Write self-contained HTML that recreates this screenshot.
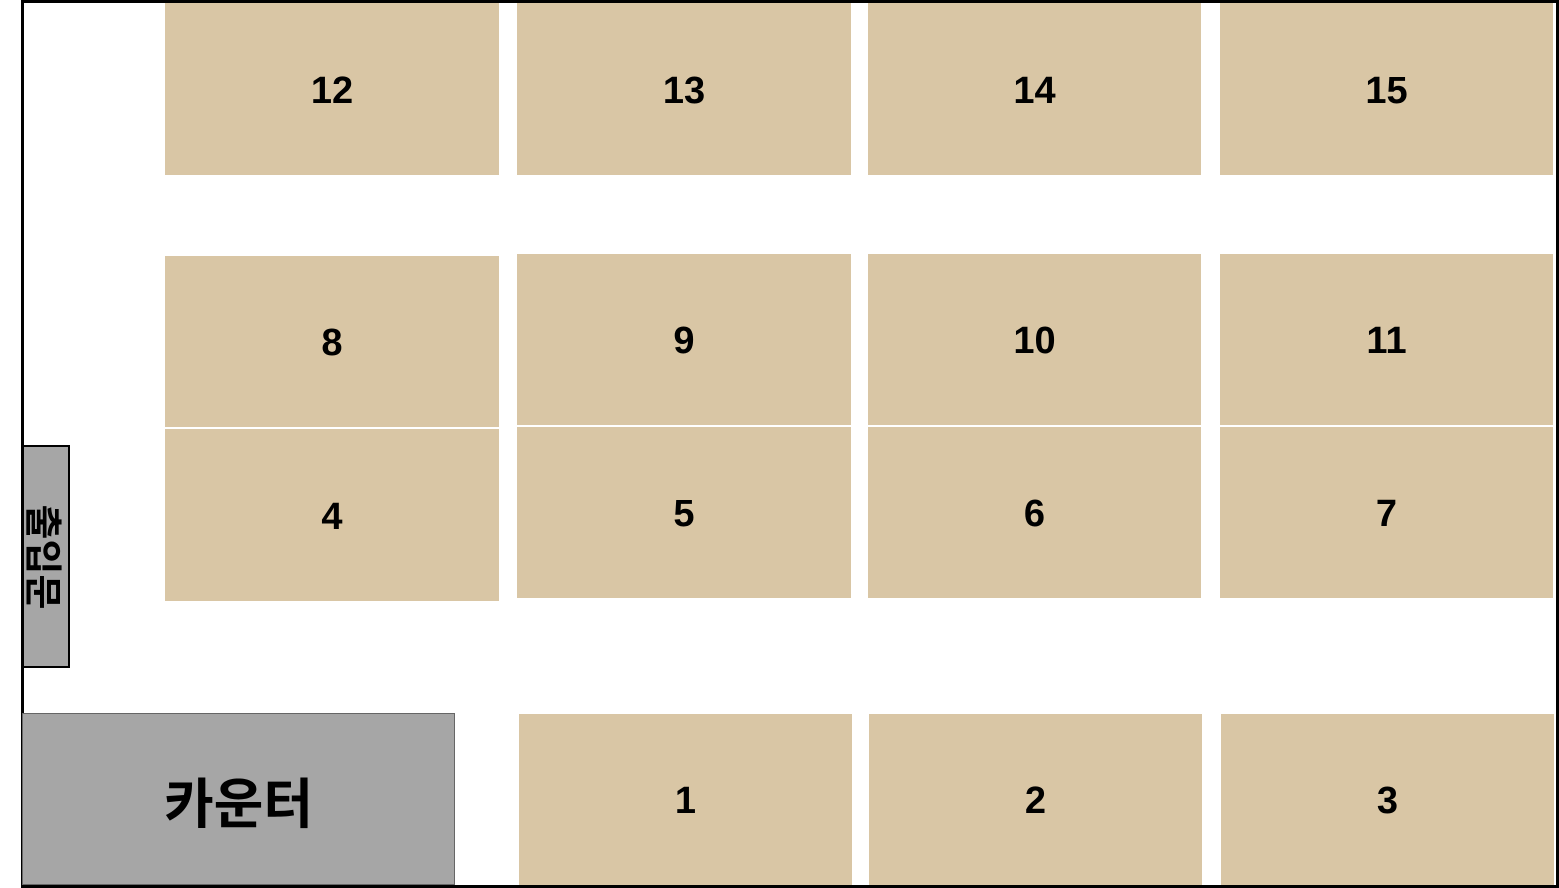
<!DOCTYPE html>
<html><head><meta charset="utf-8"><style>
html,body{margin:0;padding:0;background:#fff;}
body{width:1559px;height:888px;position:relative;overflow:hidden;font-family:"Liberation Sans","Noto Sans CJK KR",sans-serif;}
.frame{position:absolute;left:21px;top:0;border:3px solid #000;box-sizing:border-box;width:1538px;height:888px;}
.b{position:absolute;background:#d9c6a5;display:flex;align-items:center;justify-content:center;font-weight:bold;font-size:38px;color:#000;padding-top:4px;box-sizing:border-box;}
.cnt{position:absolute;left:22px;top:713px;width:433px;height:172px;background:#a6a6a6;border:1px solid #666;box-sizing:border-box;display:flex;align-items:center;justify-content:center;font-size:54px;font-weight:bold;padding-right:0;}
.door{position:absolute;left:22px;top:445px;width:48px;height:223px;background:#a6a6a6;border:2px solid #000;box-sizing:border-box;}
.door span{position:absolute;left:50%;top:50%;transform:translate(-50%,-50%) rotate(90deg);font-size:38px;font-weight:bold;white-space:nowrap;}
</style></head><body>
<div class="frame"></div>
<div class="b" style="left:165px;top:3px;width:334px;height:172px">12</div>
<div class="b" style="left:517px;top:3px;width:334px;height:172px">13</div>
<div class="b" style="left:868px;top:3px;width:333px;height:172px">14</div>
<div class="b" style="left:1220px;top:3px;width:333px;height:172px">15</div>
<div class="b" style="left:165px;top:256px;width:334px;height:171px">8</div>
<div class="b" style="left:517px;top:254px;width:334px;height:171px">9</div>
<div class="b" style="left:868px;top:254px;width:333px;height:171px">10</div>
<div class="b" style="left:1220px;top:254px;width:333px;height:171px">11</div>
<div class="b" style="left:165px;top:429px;width:334px;height:172px">4</div>
<div class="b" style="left:517px;top:427px;width:334px;height:171px">5</div>
<div class="b" style="left:868px;top:427px;width:333px;height:171px">6</div>
<div class="b" style="left:1220px;top:427px;width:333px;height:171px">7</div>
<div class="b" style="left:519px;top:714px;width:333px;height:171px">1</div>
<div class="b" style="left:869px;top:714px;width:333px;height:171px">2</div>
<div class="b" style="left:1221px;top:714px;width:333px;height:171px">3</div>
<div class="cnt">카운터</div>
<div class="door"><span>출입문</span></div>
</body></html>
